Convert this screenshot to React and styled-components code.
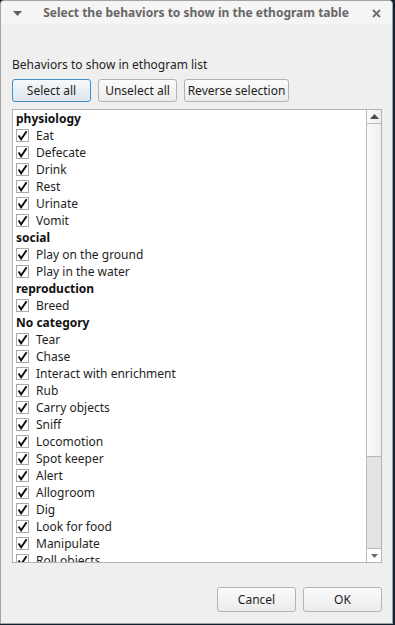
import styled, { createGlobalStyle } from "styled-components"

const GlobalStyle = createGlobalStyle`
    html, body {
        margin: 0;
        padding: 0;
        background: #14212e;
    }
    body {
        font-family: "Noto Sans", "DejaVu Sans", sans-serif;
        font-size: 12px;
    }
`

const behaviors = [
    { name: "physiology", category: true },
    { name: "Eat" },
    { name: "Defecate" },
    { name: "Drink" },
    { name: "Rest" },
    { name: "Urinate" },
    { name: "Vomit" },
    { name: "social", category: true },
    { name: "Play on the ground" },
    { name: "Play in the water" },
    { name: "reproduction", category: true },
    { name: "Breed" },
    { name: "No category", category: true },
    { name: "Tear" },
    { name: "Chase" },
    { name: "Interact with enrichment" },
    { name: "Rub" },
    { name: "Carry objects" },
    { name: "Sniff" },
    { name: "Locomotion" },
    { name: "Spot keeper" },
    { name: "Alert" },
    { name: "Allogroom" },
    { name: "Dig" },
    { name: "Look for food" },
    { name: "Manipulate" },
    { name: "Roll objects" },
    { name: "Swim" },
]

function CheckMark() {
    return (
        <svg width="11" height="11" viewBox="0 0 11 11">
            <path d="M1.6 5.4 L4.1 9.3 L9.6 1.2" fill="none" stroke="#0c0c0c" strokeWidth="1.9" strokeLinejoin="miter" />
        </svg>
    )
}

export default function App() {
    return (
        <>
            <GlobalStyle />
            <Window>
                <TitleBar>
                    <MenuArrow>
                        <svg width="9" height="5" viewBox="0 0 9 5"><path d="M0 0 H9 L4.5 5 Z" fill="#5e5e5e" /></svg>
                    </MenuArrow>
                    <Title>Select the behaviors to show in the ethogram table</Title>
                    <CloseIcon>
                        <svg width="9" height="9" viewBox="0 0 9 9"><path d="M1 1 L8 8 M8 1 L1 8" stroke="#6e6e6e" strokeWidth="1.8" /></svg>
                    </CloseIcon>
                </TitleBar>

                <Body>
                    <Label>Behaviors to show in ethogram list</Label>
                    <ButtonRow>
                        <PushButton $width={79} $focused>Select all</PushButton>
                        <PushButton $width={79}>Unselect all</PushButton>
                        <PushButton $width={105}>Reverse selection</PushButton>
                    </ButtonRow>

                    <ListBox>
                        <Items>
                            {behaviors.map((b) => b.category ?
                                <CategoryRow key={b.name}>{b.name}</CategoryRow>
                                :
                                <ItemRow key={b.name}>
                                    <CheckBox><CheckMark /></CheckBox>
                                    <span>{b.name}</span>
                                </ItemRow>
                            )}
                        </Items>
                        <ScrollBar>
                            <ArrowButton>
                                <svg width="9" height="5" viewBox="0 0 9 5"><path d="M0 5 H9 L4.5 0 Z" fill="#4a4a4a" /></svg>
                            </ArrowButton>
                            <Track>
                                <Thumb />
                            </Track>
                            <ArrowButton $bottom>
                                <svg width="7" height="4" viewBox="0 0 7 4"><path d="M0 0 H7 L3.5 4 Z" fill="#6a6a6a" /></svg>
                            </ArrowButton>
                        </ScrollBar>
                    </ListBox>

                    <Footer>
                        <PushButton $width={79} $height={25}>Cancel</PushButton>
                        <PushButton $width={79} $height={25}>OK</PushButton>
                    </Footer>
                </Body>
            </Window>
        </>
    )
}

const Window = styled.div`
    width: 393px;
    height: 624px;
    box-sizing: border-box;
    border: 1px solid #a4a4a4;
    border-radius: 4px 4px 0 0;
    background: #efefef;
    display: flex;
    flex-direction: column;
    overflow: hidden;
    color: #1e1e1e;
`

const TitleBar = styled.div`
    height: 23px;
    flex-shrink: 0;
    background: #f5f5f5;
    display: flex;
    align-items: center;
    padding: 0 10px 0 10px;
`

const MenuArrow = styled.div`
    width: 10px;
    display: flex;
    align-items: center;
    padding-left: 2px;
    padding-top: 2px;
`

const Title = styled.div`
    flex: 1;
    text-align: center;
    font-weight: bold;
    font-size: 12px;
    color: #676767;
    padding-right: 3px;
    white-space: nowrap;
`

const CloseIcon = styled.div`
    width: 10px;
    display: flex;
    align-items: center;
    padding-top: 2px;
`

const Body = styled.div`
    flex: 1;
    display: flex;
    flex-direction: column;
    padding: 32px 10px 0 11px;
`

const Label = styled.div`
    line-height: 17px;
    height: 17px;
`

const ButtonRow = styled.div`
    display: flex;
    gap: 7px;
    margin-top: 6px;
`

const PushButton = styled.button`
    width: ${p => p.$width}px;
    height: ${p => p.$height || 23}px;
    box-sizing: border-box;
    padding: 0;
    white-space: nowrap;
    font-family: "Noto Sans", "DejaVu Sans", sans-serif;
    font-size: 12px;
    color: #1e1e1e;
    border-radius: 3px;
    border: 1px solid ${p => p.$focused ? "#3c8fc8" : "#b2b2b2"};
    background: ${p => p.$focused
        ? "linear-gradient(#f6f8fa, #dfe6ec)"
        : "linear-gradient(#fbfbfb, #ececec)"};
`

const ListBox = styled.div`
    margin-top: 7px;
    height: 454px;
    box-sizing: border-box;
    border: 1px solid #b3b3b3;
    background: #ffffff;
    display: flex;
`

const Items = styled.div`
    flex: 1;
    overflow: hidden;
    padding: 0 0 0 3px;
`

const CategoryRow = styled.div`
    height: 17px;
    line-height: 17px;
    font-weight: bold;
    color: #111;
`

const ItemRow = styled.div`
    height: 17px;
    display: flex;
    align-items: center;
    gap: 7px;
    line-height: 17px;
`

const CheckBox = styled.div`
    width: 13px;
    height: 13px;
    box-sizing: border-box;
    border: 1px solid #a9a9a9;
    background: #fff;
    display: flex;
    align-items: center;
    justify-content: center;
`

const ScrollBar = styled.div`
    width: 14px;
    border-left: 1px solid #bcbcbc;
    display: flex;
    flex-direction: column;
    background: #e3e3e3;
`

const ArrowButton = styled.div`
    height: 13px;
    flex-shrink: 0;
    display: flex;
    align-items: center;
    justify-content: center;
    border-bottom: ${p => p.$bottom ? "none" : "1px solid #bcbcbc"};
    border-top: ${p => p.$bottom ? "1px solid #bcbcbc" : "none"};
    background: ${p => p.$bottom ? "#ffffff" : "linear-gradient(to right, #fdfdfd, #ececec)"};
`

const Track = styled.div`
    flex: 1;
    display: flex;
    flex-direction: column;
`

const Thumb = styled.div`
    height: 333px;
    box-sizing: border-box;
    border-bottom: 1px solid #b6b6b6;
    background: linear-gradient(to right, #fbfbfb, #eeeeee);
`

const Footer = styled.div`
    display: flex;
    justify-content: flex-end;
    gap: 7px;
    margin-top: 24px;
`
